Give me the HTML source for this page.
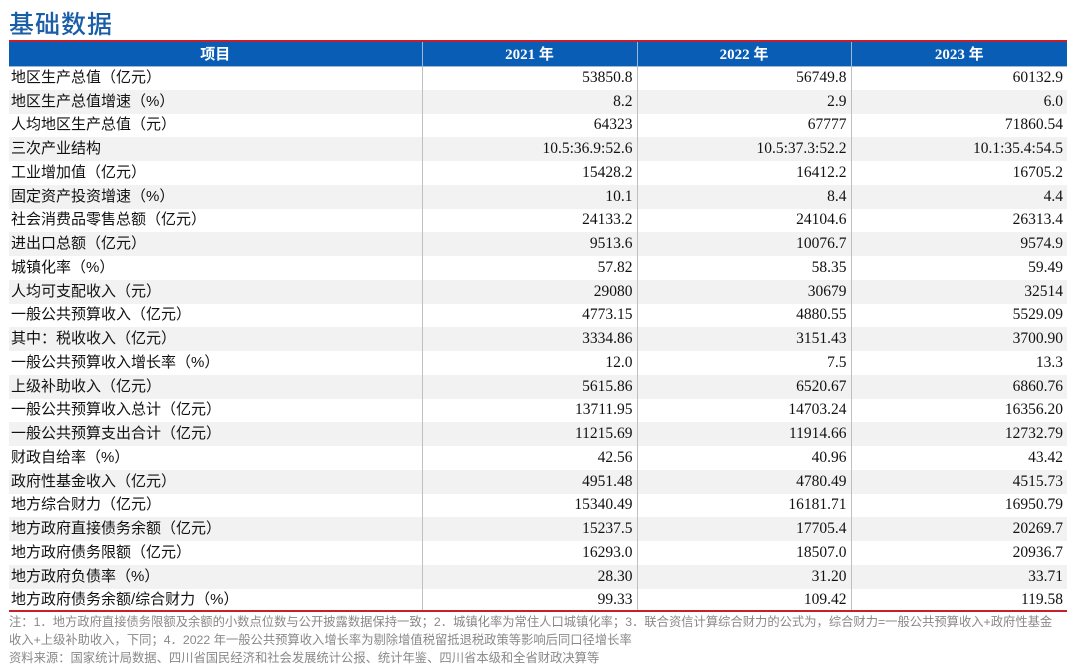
<!DOCTYPE html>
<html><head><meta charset="utf-8"><style>
*{margin:0;padding:0;box-sizing:border-box}
body{width:1080px;height:667px;background:#fff;position:relative;overflow:hidden;font-family:"Liberation Sans","Noto Sans CJK SC",sans-serif}
.title{position:absolute;left:9px;top:5px;font-size:25px;color:#1a5ea8;font-weight:500;letter-spacing:1px}
.red1{position:absolute;left:9px;top:40px;width:1058px;height:2px;background:#c8202a}
table{position:absolute;left:9px;top:42px;width:1058px;border-collapse:collapse;table-layout:fixed}
th{background:#0a5db4;color:#fff;height:24px;font-size:15px;font-weight:bold;font-family:"Liberation Serif","Noto Sans CJK SC",serif;border-right:1px solid #9fb8d8;border-bottom:1px solid #9fb8d8}
td{height:23.75px;font-size:15px;color:#111;border-right:1px solid #bfbfbf;padding:0 2px;line-height:20px;white-space:nowrap}
td.n{text-align:right;font-family:"Liberation Serif",serif;font-size:15.5px;padding-right:4px}
td:last-child,th:last-child{border-right:none}
tr:nth-child(odd) td{background:#f2f2f2}
tr:nth-child(even) td{background:#fff}
.red2{position:absolute;left:9px;top:610px;width:1058px;height:2px;background:#c8202a}
.note{position:absolute;left:9px;font-size:12.3px;color:#888;white-space:nowrap}
</style></head><body>
<div class="title">基础数据</div>
<div class="red1"></div>
<table>
<colgroup><col style="width:413px"><col style="width:215px"><col style="width:214px"><col style="width:216px"></colgroup>
<thead><tr><th>项目</th><th>2021 年</th><th>2022 年</th><th>2023 年</th></tr></thead>
<tbody>
<tr style="display:none"><td></td></tr>
<tr><td>地区生产总值（亿元）</td><td class="n">53850.8</td><td class="n">56749.8</td><td class="n">60132.9</td></tr>
<tr><td>地区生产总值增速（%）</td><td class="n">8.2</td><td class="n">2.9</td><td class="n">6.0</td></tr>
<tr><td>人均地区生产总值（元）</td><td class="n">64323</td><td class="n">67777</td><td class="n">71860.54</td></tr>
<tr><td>三次产业结构</td><td class="n">10.5:36.9:52.6</td><td class="n">10.5:37.3:52.2</td><td class="n">10.1:35.4:54.5</td></tr>
<tr><td>工业增加值（亿元）</td><td class="n">15428.2</td><td class="n">16412.2</td><td class="n">16705.2</td></tr>
<tr><td>固定资产投资增速（%）</td><td class="n">10.1</td><td class="n">8.4</td><td class="n">4.4</td></tr>
<tr><td>社会消费品零售总额（亿元）</td><td class="n">24133.2</td><td class="n">24104.6</td><td class="n">26313.4</td></tr>
<tr><td>进出口总额（亿元）</td><td class="n">9513.6</td><td class="n">10076.7</td><td class="n">9574.9</td></tr>
<tr><td>城镇化率（%）</td><td class="n">57.82</td><td class="n">58.35</td><td class="n">59.49</td></tr>
<tr><td>人均可支配收入（元）</td><td class="n">29080</td><td class="n">30679</td><td class="n">32514</td></tr>
<tr><td>一般公共预算收入（亿元）</td><td class="n">4773.15</td><td class="n">4880.55</td><td class="n">5529.09</td></tr>
<tr><td>其中：税收收入（亿元）</td><td class="n">3334.86</td><td class="n">3151.43</td><td class="n">3700.90</td></tr>
<tr><td>一般公共预算收入增长率（%）</td><td class="n">12.0</td><td class="n">7.5</td><td class="n">13.3</td></tr>
<tr><td>上级补助收入（亿元）</td><td class="n">5615.86</td><td class="n">6520.67</td><td class="n">6860.76</td></tr>
<tr><td>一般公共预算收入总计（亿元）</td><td class="n">13711.95</td><td class="n">14703.24</td><td class="n">16356.20</td></tr>
<tr><td>一般公共预算支出合计（亿元）</td><td class="n">11215.69</td><td class="n">11914.66</td><td class="n">12732.79</td></tr>
<tr><td>财政自给率（%）</td><td class="n">42.56</td><td class="n">40.96</td><td class="n">43.42</td></tr>
<tr><td>政府性基金收入（亿元）</td><td class="n">4951.48</td><td class="n">4780.49</td><td class="n">4515.73</td></tr>
<tr><td>地方综合财力（亿元）</td><td class="n">15340.49</td><td class="n">16181.71</td><td class="n">16950.79</td></tr>
<tr><td>地方政府直接债务余额（亿元）</td><td class="n">15237.5</td><td class="n">17705.4</td><td class="n">20269.7</td></tr>
<tr><td>地方政府债务限额（亿元）</td><td class="n">16293.0</td><td class="n">18507.0</td><td class="n">20936.7</td></tr>
<tr><td>地方政府负债率（%）</td><td class="n">28.30</td><td class="n">31.20</td><td class="n">33.71</td></tr>
<tr><td>地方政府债务余额/综合财力（%）</td><td class="n">99.33</td><td class="n">109.42</td><td class="n">119.58</td></tr>
</tbody></table>
<div class="red2"></div>
<div class="note" style="top:612px">注：1．地方政府直接债务限额及余额的小数点位数与公开披露数据保持一致；2．城镇化率为常住人口城镇化率；3．联合资信计算综合财力的公式为，综合财力=一般公共预算收入+政府性基金</div>
<div class="note" style="top:630px">收入+上级补助收入，下同；4．2022 年一般公共预算收入增长率为剔除增值税留抵退税政策等影响后同口径增长率</div>
<div class="note" style="top:648px">资料来源：国家统计局数据、四川省国民经济和社会发展统计公报、统计年鉴、四川省本级和全省财政决算等</div>
</body></html>
